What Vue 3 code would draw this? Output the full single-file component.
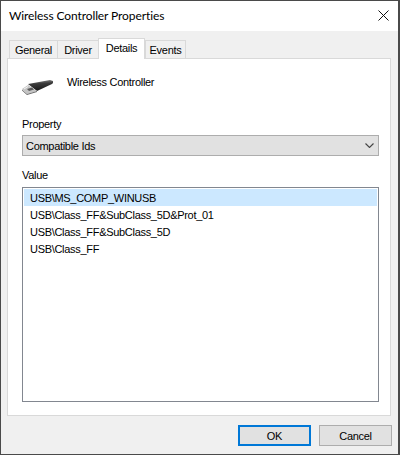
<template>
  <div class="dialog">
    <div class="titlebar">
      <span class="title">Wireless Controller Properties</span>
      <svg class="close" width="11" height="11" viewBox="0 0 11 11">
        <path d="M0.5 0.5L10.5 10.5M10.5 0.5L0.5 10.5" stroke="#111" stroke-width="1" fill="none" />
      </svg>
    </div>

    <div class="body">
      <div class="tabs">
        <div
          v-for="tab in tabs"
          :key="tab.name"
          class="tab"
          :class="{ active: tab.name === activeTab }"
          :style="{ width: tab.width + 'px' }"
        >
          {{ tab.name }}
        </div>
      </div>

      <div class="panel">
        <div class="device">
          <svg class="usb" width="34" height="20" viewBox="0 0 34 20">
            <defs>
              <linearGradient id="plug" x1="0.3" y1="0" x2="0.45" y2="1">
                <stop offset="0" stop-color="#8a8a8a" />
                <stop offset="0.35" stop-color="#3a3a3a" />
                <stop offset="1" stop-color="#161616" />
              </linearGradient>
            </defs>
            <path d="M6 6L28 2L31 3L31 5L30 6L15 13Z" fill="url(#plug)" />
            <path d="M0 11L6 7L15 13L5 16Z" fill="#c4c4c4" />
            <path d="M0 11.5L5 16L15 13L15 14L5 17L0 12.5Z" fill="#6a6a6a" />
            <path d="M5 11L10 9.5L12 11.5L7 13Z" fill="#5a5a5a" />
            <path d="M2 11L6 8.5" stroke="#f2f2f2" stroke-width="1" fill="none" />
          </svg>
          <span>Wireless Controller</span>
        </div>

        <div class="label">Property</div>
        <div class="combo">
          <span>Compatible Ids</span>
          <svg width="9" height="5" viewBox="0 0 9 5">
            <path d="M0.5 0.5L4.5 4.5L8.5 0.5" stroke="#444" stroke-width="1.1" fill="none" />
          </svg>
        </div>

        <div class="label value-label">Value</div>
        <div class="listbox">
          <div
            v-for="(row, i) in values"
            :key="row"
            class="row"
            :class="{ selected: i === 0 }"
          >
            {{ row }}
          </div>
        </div>
      </div>

      <div class="footer">
        <button class="btn default">OK</button>
        <button class="btn">Cancel</button>
      </div>
    </div>
  </div>
</template>

<script setup>
const tabs = [
  { name: 'General', width: 49 },
  { name: 'Driver', width: 42 },
  { name: 'Details', width: 47 },
  { name: 'Events', width: 41 }
]
const activeTab = 'Details'

const values = [
  'USB\\MS_COMP_WINUSB',
  'USB\\Class_FF&SubClass_5D&Prot_01',
  'USB\\Class_FF&SubClass_5D',
  'USB\\Class_FF'
]
</script>

<style>
html,
body {
  margin: 0;
  background: #fff;
}
</style>

<style scoped>
.dialog {
  box-sizing: border-box;
  width: 400px;
  height: 455px;
  display: flex;
  flex-direction: column;
  border: 1px solid #4a4a4a;
  border-right-width: 2px;
  font-family: 'Liberation Sans', Arial, sans-serif;
  font-size: 11px;
  letter-spacing: -0.3px;
  color: #000;
  background: #fff;
}

.titlebar {
  height: 30px;
  flex: none;
  display: flex;
  align-items: center;
  justify-content: space-between;
  padding: 0 9px 0 8px;
}

.title {
  font-family: Lato, 'Open Sans', sans-serif;
  font-size: 12px;
  letter-spacing: -0.1px;
  margin-top: -1px;
}

.close {
  margin-top: -2px;
}

.body {
  flex: 1;
  display: flex;
  flex-direction: column;
  background: #f0f0f0;
  padding: 7px 6px 0;
}

.tabs {
  height: 20px;
  display: flex;
  align-items: flex-end;
  padding-left: 2px;
}

.tab {
  box-sizing: border-box;
  height: 18px;
  line-height: 18px;
  text-align: center;
  border: 1px solid #d9d9d9;
  border-bottom: 0;
  margin-right: -1px;
}

.tab.active {
  position: relative;
  z-index: 1;
  height: 21px;
  margin: 0 0 -1px 0;
  background: #fff;
  line-height: 18px;
}

.panel {
  box-sizing: border-box;
  height: 358px;
  margin-right: 1px;
  background: #fff;
  border: 1px solid #d9d9d9;
  padding: 0 11px 0 14px;
}

.device {
  display: flex;
  align-items: flex-start;
  height: 42px;
  padding-top: 15px;
  line-height: 16px;
}

.usb {
  margin: 4px 11px 0 0;
}

.label {
  line-height: 16px;
}

.value-label {
  margin-top: 11px;
}

.combo {
  box-sizing: border-box;
  height: 21px;
  margin-top: 3px;
  display: flex;
  align-items: center;
  justify-content: space-between;
  padding: 0 4px 0 3px;
  background: #e1e1e1;
  border: 1px solid #adadad;
}

.listbox {
  box-sizing: border-box;
  height: 215px;
  margin-top: 4px;
  padding: 1px;
  background: #fff;
  border: 1px solid #828790;
}

.row {
  height: 17px;
  line-height: 19px;
  padding-left: 6px;
}

.row.selected {
  background: #cce8ff;
}

.footer {
  display: flex;
  justify-content: flex-end;
  gap: 8px;
  padding-top: 9px;
}

.btn {
  box-sizing: border-box;
  width: 73px;
  height: 21px;
  padding: 0;
  font: inherit;
  letter-spacing: inherit;
  color: #000;
  background: #e1e1e1;
  border: 1px solid #adadad;
  border-radius: 0;
}

.btn.default {
  border: 2px solid #0078d7;
}
</style>
